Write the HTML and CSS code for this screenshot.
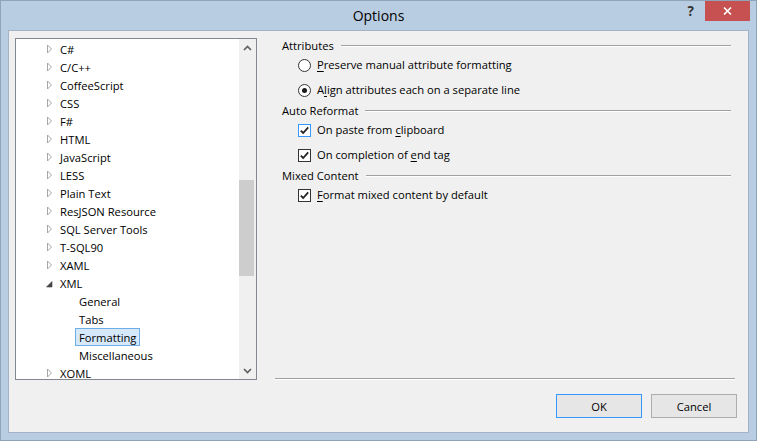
FILE: index.html
```html
<!DOCTYPE html>
<html lang="en">
<head>
<meta charset="utf-8">
<title>Options</title>
<link rel="stylesheet" href="styles.css">
</head>
<body>
<div class="window">
  <div class="titlebar">
    <div class="tb-spacer"></div>
    <div class="title">Options</div>
    <div class="controls">
      <span class="help">?</span>
      <span class="close"><svg width="9" height="8" viewBox="0 0 9 8"><path d="M1 0.5 L8 7.5 M8 0.5 L1 7.5" stroke="#fff" stroke-width="1.6" fill="none"/></svg></span>
    </div>
  </div>
  <div class="client">
    <div class="tree">
      <ul class="tree-list">
        <li class="node"><span class="exp"><svg width="7" height="10" viewBox="0 0 7 10"><path d="M1.5 1 L5.5 5 L1.5 9 Z" fill="#fff" stroke="#a6a6a6" stroke-width="1"/></svg></span><span class="label">C#</span></li>
        <li class="node"><span class="exp"><svg width="7" height="10" viewBox="0 0 7 10"><path d="M1.5 1 L5.5 5 L1.5 9 Z" fill="#fff" stroke="#a6a6a6" stroke-width="1"/></svg></span><span class="label">C/C++</span></li>
        <li class="node"><span class="exp"><svg width="7" height="10" viewBox="0 0 7 10"><path d="M1.5 1 L5.5 5 L1.5 9 Z" fill="#fff" stroke="#a6a6a6" stroke-width="1"/></svg></span><span class="label">CoffeeScript</span></li>
        <li class="node"><span class="exp"><svg width="7" height="10" viewBox="0 0 7 10"><path d="M1.5 1 L5.5 5 L1.5 9 Z" fill="#fff" stroke="#a6a6a6" stroke-width="1"/></svg></span><span class="label">CSS</span></li>
        <li class="node"><span class="exp"><svg width="7" height="10" viewBox="0 0 7 10"><path d="M1.5 1 L5.5 5 L1.5 9 Z" fill="#fff" stroke="#a6a6a6" stroke-width="1"/></svg></span><span class="label">F#</span></li>
        <li class="node"><span class="exp"><svg width="7" height="10" viewBox="0 0 7 10"><path d="M1.5 1 L5.5 5 L1.5 9 Z" fill="#fff" stroke="#a6a6a6" stroke-width="1"/></svg></span><span class="label">HTML</span></li>
        <li class="node"><span class="exp"><svg width="7" height="10" viewBox="0 0 7 10"><path d="M1.5 1 L5.5 5 L1.5 9 Z" fill="#fff" stroke="#a6a6a6" stroke-width="1"/></svg></span><span class="label">JavaScript</span></li>
        <li class="node"><span class="exp"><svg width="7" height="10" viewBox="0 0 7 10"><path d="M1.5 1 L5.5 5 L1.5 9 Z" fill="#fff" stroke="#a6a6a6" stroke-width="1"/></svg></span><span class="label">LESS</span></li>
        <li class="node"><span class="exp"><svg width="7" height="10" viewBox="0 0 7 10"><path d="M1.5 1 L5.5 5 L1.5 9 Z" fill="#fff" stroke="#a6a6a6" stroke-width="1"/></svg></span><span class="label">Plain Text</span></li>
        <li class="node"><span class="exp"><svg width="7" height="10" viewBox="0 0 7 10"><path d="M1.5 1 L5.5 5 L1.5 9 Z" fill="#fff" stroke="#a6a6a6" stroke-width="1"/></svg></span><span class="label">ResJSON Resource</span></li>
        <li class="node"><span class="exp"><svg width="7" height="10" viewBox="0 0 7 10"><path d="M1.5 1 L5.5 5 L1.5 9 Z" fill="#fff" stroke="#a6a6a6" stroke-width="1"/></svg></span><span class="label">SQL Server Tools</span></li>
        <li class="node"><span class="exp"><svg width="7" height="10" viewBox="0 0 7 10"><path d="M1.5 1 L5.5 5 L1.5 9 Z" fill="#fff" stroke="#a6a6a6" stroke-width="1"/></svg></span><span class="label">T-SQL90</span></li>
        <li class="node"><span class="exp"><svg width="7" height="10" viewBox="0 0 7 10"><path d="M1.5 1 L5.5 5 L1.5 9 Z" fill="#fff" stroke="#a6a6a6" stroke-width="1"/></svg></span><span class="label">XAML</span></li>
        <li class="node"><span class="exp"><svg width="7" height="10" viewBox="0 0 7 10"><path d="M6 3.5 L6 9 L0.5 9 Z" fill="#444" stroke="#444" stroke-width="0.6"/></svg></span><span class="label">XML</span></li>
        <li class="node child"><span class="label">General</span></li>
        <li class="node child"><span class="label">Tabs</span></li>
        <li class="node child"><span class="label selected">Formatting</span></li>
        <li class="node child"><span class="label">Miscellaneous</span></li>
        <li class="node"><span class="exp"><svg width="7" height="10" viewBox="0 0 7 10"><path d="M1.5 1 L5.5 5 L1.5 9 Z" fill="#fff" stroke="#a6a6a6" stroke-width="1"/></svg></span><span class="label">XOML</span></li>
      </ul>
      <div class="vscroll">
        <div class="sb-btn"><svg width="9" height="6" viewBox="0 0 9 6"><path d="M1 5 L4.5 1.5 L8 5" stroke="#606060" stroke-width="1.7" fill="none"/></svg></div>
        <div class="sb-track"><div class="sb-thumb"></div></div>
        <div class="sb-btn"><svg width="9" height="6" viewBox="0 0 9 6"><path d="M1 1 L4.5 4.5 L8 1" stroke="#606060" stroke-width="1.7" fill="none"/></svg></div>
      </div>
    </div>
    <div class="right">
      <div class="options">
        <section class="group">
          <div class="group-head"><span>Attributes</span><i class="etch"></i></div>
          <div class="opt"><span class="radio"></span><span><u>P</u>reserve manual attribute formatting</span></div>
          <div class="opt"><span class="radio checked"></span><span>A<u>l</u>ign attributes each on a separate line</span></div>
        </section>
        <section class="group">
          <div class="group-head"><span>Auto Reformat</span><i class="etch"></i></div>
          <div class="opt"><span class="check focus"><svg width="11" height="11" viewBox="0 0 11 11"><path d="M1.8 5.6 L4.2 8 L9.2 2.4" stroke="#222" stroke-width="1.8" fill="none"/></svg></span><span>On paste from <u>c</u>lipboard</span></div>
          <div class="opt"><span class="check"><svg width="11" height="11" viewBox="0 0 11 11"><path d="M1.8 5.6 L4.2 8 L9.2 2.4" stroke="#222" stroke-width="1.8" fill="none"/></svg></span><span>On completion of <u>e</u>nd tag</span></div>
        </section>
        <section class="group">
          <div class="group-head"><span>Mixed Content</span><i class="etch"></i></div>
          <div class="opt"><span class="check"><svg width="11" height="11" viewBox="0 0 11 11"><path d="M1.8 5.6 L4.2 8 L9.2 2.4" stroke="#222" stroke-width="1.8" fill="none"/></svg></span><span><u>F</u>ormat mixed content by default</span></div>
        </section>
      </div>
      <div class="sep"></div>
      <div class="buttons">
        <button class="btn default">OK</button>
        <button class="btn">Cancel</button>
      </div>
    </div>
  </div>
</div>
</body>
</html>
```

FILE: styles.css
```css
* { box-sizing: border-box; }

html, body {
  margin: 0;
  padding: 0;
  background: #b9cde2;
}

body {
  font-family: "Open Sans", "Noto Sans", sans-serif;
  font-size: 11.2px;
  color: #000;
}

.window {
  width: 757px;
  height: 441px;
  border: 1px solid #8fa3b9;
  background: #b9cde2;
  padding: 0 7px 7px 7px;
  display: flex;
  flex-direction: column;
}

.titlebar {
  height: 29px;
  margin: 0 -7px;
  display: grid;
  grid-template-columns: 1fr auto 1fr;
  align-items: center;
}

.title {
  font-size: 14px;
  color: #000;
  line-height: 18px;
  padding-top: 1px;
}

.controls {
  align-self: start;
  display: flex;
  justify-content: flex-end;
  align-items: flex-start;
  padding-right: 6px;
}

.help {
  font-weight: 700;
  font-size: 13.5px;
  line-height: 16px;
  color: #333;
  margin-top: 2px;
  margin-right: 11px;
}

.close {
  width: 45px;
  height: 20px;
  background: #c75050;
  display: flex;
  align-items: center;
  justify-content: center;
}

.client {
  flex: 1;
  background: #f0f0f0;
  border: 1px solid #a3b3c5;
  display: grid;
  grid-template-columns: 242px 462px;
  column-gap: 18px;
  padding: 7px 11px 14px 6px;
  align-items: start;
}

/* Tree */
.tree {
  height: 342px;
  border: 1px solid #828790;
  background: #fff;
  display: flex;
  overflow: hidden;
}

.tree-list {
  flex: 1;
  list-style: none;
  margin: 0;
  padding: 1px 0 0 0;
  overflow: hidden;
}

.node {
  height: 18px;
  display: flex;
  align-items: center;
  padding-left: 29px;
  white-space: nowrap;
}

.node.child {
  padding-left: 59px;
}

.exp {
  width: 11px;
  height: 18px;
  display: flex;
  align-items: center;
  padding-left: 1px;
}

.label {
  height: 18px;
  line-height: 16px;
  border: 1px solid transparent;
  padding: 1px 3px 0 3px;
}

.label.selected {
  background: #d5e9fb;
  border-color: #6eaee6;
}

.vscroll {
  width: 17px;
  background: #f0f0f0;
  display: flex;
  flex-direction: column;
}

.sb-btn {
  height: 17px;
  display: flex;
  align-items: center;
  justify-content: center;
  padding-right: 1px;
}

.sb-track {
  flex: 1;
}

.sb-thumb {
  margin: 124px 2px 0 0;
  height: 96px;
  background: #cdcdcd;
}

/* Right column */
.right {
  height: 380px;
  display: flex;
  flex-direction: column;
}

.options {
  flex: 1;
  padding: 0 6px 0 7px;
}

.group + .group {
  margin-top: 5px;
}

.group-head {
  height: 16px;
  display: flex;
  align-items: center;
  line-height: 16px;
}

.etch {
  flex: 1;
  height: 2px;
  margin-left: 7px;
  border-top: 1px solid #a0a0a0;
  border-bottom: 1px solid #fff;
  margin-top: -1px;
}

.opt {
  height: 16px;
  line-height: 16px;
  display: flex;
  align-items: center;
  gap: 6px;
  margin-left: 16px;
  margin-top: 9px;
}

.group-head + .opt {
  margin-top: 3px;
}

.opt u {
  text-underline-offset: 2px;
}

.radio {
  width: 13px;
  height: 13px;
  border: 1px solid #333;
  border-radius: 50%;
  background: #fff;
  display: flex;
  align-items: center;
  justify-content: center;
  flex: none;
}

.radio.checked::after {
  content: "";
  width: 5px;
  height: 5px;
  border-radius: 50%;
  background: #1a1a1a;
}

.check {
  width: 13px;
  height: 13px;
  border: 1px solid #333;
  background: #fff;
  display: flex;
  align-items: center;
  justify-content: center;
  flex: none;
}

.check.focus {
  border-color: #3399ff;
}

.sep {
  height: 2px;
  margin-right: 2px;
  border-top: 1px solid #a0a0a0;
  border-bottom: 1px solid #fff;
}

.buttons {
  display: flex;
  justify-content: flex-end;
  gap: 9px;
  margin-top: 14px;
}

.btn {
  width: 86px;
  height: 24px;
  font-family: inherit;
  font-size: 11.2px;
  color: #000;
  background: #e6e6e6;
  border: 1px solid #adadad;
  padding: 0;
  margin: 0;
}

.btn.default {
  border-color: #3399ff;
}
```
